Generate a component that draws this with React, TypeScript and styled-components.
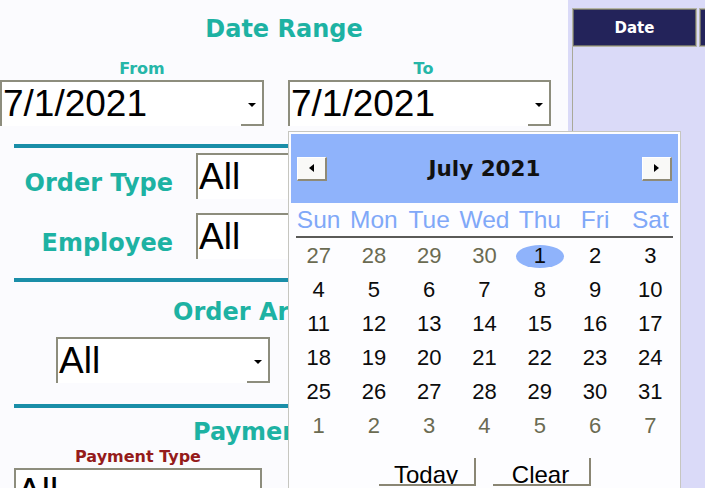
import React from "react";
import styled, { createGlobalStyle } from "styled-components";

const GlobalStyle = createGlobalStyle`
  html, body {
    margin: 0;
    padding: 0;
    overflow: hidden;
  }
  body {
    background: #fbfbfe;
    font-family: "DejaVu Sans", sans-serif;
  }
`;

const TEAL = "#1db2a3";
const BEVEL = "#8d8d7d";

const Page = styled.div`
  position: relative;
  display: flex;
  width: 705px;
  height: 488px;
  overflow: hidden;
`;

// left side: the filter form
const FilterPanel = styled.div`
  width: 568px;
  flex: none;
  display: flex;
  flex-direction: column;
  background: #fbfbfe;

  & > * {
    flex-shrink: 0;
  }
`;

const SectionTitle = styled.div<{ $indent?: number; $top: number }>`
  margin-top: ${(p) => p.$top}px;
  padding-left: ${(p) => (p.$indent ? `${p.$indent}px` : "0")};
  text-align: ${(p) => (p.$indent ? "left" : "center")};
  font-family: "DejaVu Sans", sans-serif;
  font-weight: bold;
  font-size: 24px;
  line-height: 28px;
  color: ${TEAL};
  white-space: nowrap;
`;

const DateRow = styled.div`
  display: grid;
  grid-template-columns: 264px 263px;
  column-gap: 24px;
  margin-top: 17px;
`;

const DateColumn = styled.div`
  display: flex;
  flex-direction: column;
`;

const SmallLabel = styled.div<{ $color?: string; $shift?: number }>`
  text-align: center;
  padding-left: ${(p) => p.$shift || 0}px;
  font-family: "DejaVu Sans", sans-serif;
  font-weight: bold;
  font-size: 16px;
  line-height: 18px;
  color: ${(p) => p.$color || "#26b6a8"};
  margin-bottom: 2px;
`;

const Field = styled.div<{ $width?: number; $left?: number; $top?: number }>`
  box-sizing: border-box;
  display: flex;
  flex-shrink: 0;
  width: ${(p) => (p.$width ? `${p.$width}px` : "100%")};
  height: 46px;
  margin-left: ${(p) => p.$left || 0}px;
  margin-top: ${(p) => p.$top || 0}px;
  background: #fff;
  border: 2px solid ${BEVEL};
  border-bottom: none;
`;

const FieldText = styled.div`
  flex: 1;
  padding-left: 1px;
  font-family: "Liberation Sans", Arial, sans-serif;
  font-size: 37px;
  line-height: 44px;
  color: #000;
  white-space: nowrap;
  overflow: hidden;
`;

const ArrowCell = styled.div`
  width: 21px;
  display: flex;
  align-items: center;
  justify-content: center;
  padding-top: 3px;
  border-bottom: 2px solid ${BEVEL};
`;

const DownArrow = styled.span`
  width: 0;
  height: 0;
  border-left: 4px solid transparent;
  border-right: 4px solid transparent;
  border-top: 4px solid #000;
`;

const Divider = styled.div<{ $top: number }>`
  height: 4px;
  margin: ${(p) => p.$top}px 14px 0;
  background: #1a8ea8;
`;

const FilterRow = styled.div<{ $top: number }>`
  display: grid;
  grid-template-columns: 173px 355px;
  column-gap: 23px;
  align-items: start;
  margin-top: ${(p) => p.$top}px;
`;

const RowLabel = styled.div`
  padding-top: 16px;
  text-align: right;
  font-family: "DejaVu Sans", sans-serif;
  font-weight: bold;
  font-size: 24px;
  line-height: 28px;
  color: ${TEAL};
  white-space: nowrap;
`;

const PaymentBlock = styled.div`
  width: 248px;
  margin-left: 14px;
  margin-top: 2px;
  display: flex;
  flex-direction: column;
`;

// right side: results grid
const ResultPanel = styled.div`
  flex: 1;
  background: #dadaf8;
  padding: 8px 0 0 4px;
  display: flex;
  flex-direction: column;
`;

const GridHead = styled.div`
  display: flex;
  gap: 2px;
`;

const HeadCell = styled.div<{ $width: number }>`
  box-sizing: border-box;
  flex: none;
  width: ${(p) => p.$width}px;
  height: 39px;
  display: flex;
  align-items: center;
  justify-content: center;
  background: #23235a;
  border: 1px solid #b4b4a4;
  box-shadow: inset 0 0 0 1px #6d6d6a;
  color: #fff;
  font-family: "DejaVu Sans", sans-serif;
  font-weight: bold;
  font-size: 15px;
`;

const GridBody = styled.div`
  flex: 1;
  border-left: 1px solid #a9a999;
`;

// calendar popup, dropped down from the "To" field
const Popup = styled.div`
  position: absolute;
  left: 288px;
  top: 131px;
  width: 393px;
  height: 380px;
  box-sizing: border-box;
  padding: 2px;
  background: #fdfdff;
  border: 1px solid #c6c6c0;
  display: flex;
  flex-direction: column;

  & > * {
    flex-shrink: 0;
  }
`;

const CalHeader = styled.div`
  height: 69px;
  display: flex;
  align-items: center;
  justify-content: space-between;
  padding: 0 6px;
  background: #8fb3fb;
`;

const NavButton = styled.div`
  box-sizing: border-box;
  width: 30px;
  height: 24px;
  display: flex;
  align-items: center;
  justify-content: center;
  background: #f9f9f7;
  border-top: 1px solid #fff;
  border-left: 1px solid #fff;
  border-right: 2px solid #8f8a76;
  border-bottom: 2px solid #8f8a76;
`;

const NavTriangle = styled.span<{ $dir: "left" | "right" }>`
  width: 0;
  height: 0;
  border-top: 4px solid transparent;
  border-bottom: 4px solid transparent;
  ${(p) =>
    p.$dir === "left"
      ? "border-right: 5px solid #000;"
      : "border-left: 5px solid #000;"}
`;

const MonthTitle = styled.div`
  font-family: "DejaVu Sans", sans-serif;
  font-weight: bold;
  font-size: 21.5px;
  color: #111;
`;

const WeekRow = styled.div`
  display: grid;
  grid-template-columns: repeat(7, 1fr);
  height: 33px;
  padding-top: 1px;
  box-sizing: border-box;
`;

const WeekDay = styled.div`
  text-align: center;
  font-family: "Liberation Sans", Arial, sans-serif;
  font-size: 24.5px;
  line-height: 31px;
  color: #80a8f8;
`;

const WeekRule = styled.div`
  height: 2px;
  margin: 0 5px;
  background: #5a5a58;
`;

const DaysGrid = styled.div`
  display: grid;
  grid-template-columns: repeat(7, 1fr);
  grid-auto-rows: 34px;
  padding-top: 1px;
`;

const DayCell = styled.div<{ $muted?: boolean }>`
  display: flex;
  align-items: center;
  justify-content: center;
  font-family: "Liberation Sans", Arial, sans-serif;
  font-size: 22px;
  color: ${(p) => (p.$muted ? "#6b6b52" : "#0c0c0c")};
`;

const Selected = styled.span`
  width: 48px;
  height: 23px;
  border-radius: 50%;
  background: #8fb3fb;
  display: flex;
  align-items: center;
  justify-content: center;
`;

const CalFooter = styled.div`
  display: flex;
  justify-content: center;
  gap: 17px;
  margin-top: 15px;
`;

// the label runs past the button's lower edge and is clipped there
const CalButton = styled.div<{ $width: number }>`
  box-sizing: border-box;
  width: ${(p) => p.$width}px;
  height: 28px;
  padding-top: 3px;
  overflow: hidden;
  text-align: center;
  font-family: "Liberation Sans", Arial, sans-serif;
  font-size: 24px;
  line-height: 28px;
  color: #000;
  border-right: 2px solid #8a8674;
  border-bottom: 2px solid #8a8674;
`;

type DateFieldProps = { label: string; value: string; shift: number };

function DateField({ label, value, shift }: DateFieldProps) {
  return (
    <DateColumn>
      <SmallLabel $shift={shift}>{label}</SmallLabel>
      <Field>
        <FieldText>{value}</FieldText>
        <ArrowCell>
          <DownArrow />
        </ArrowCell>
      </Field>
    </DateColumn>
  );
}

const weekDays = ["Sun", "Mon", "Tue", "Wed", "Thu", "Fri", "Sat"];

type Day = { n: number; muted?: boolean };

const days: Day[] = [
  ...[27, 28, 29, 30].map((n) => ({ n, muted: true })),
  ...Array.from({ length: 31 }, (_, i) => ({ n: i + 1 })),
  ...Array.from({ length: 7 }, (_, i) => ({ n: i + 1, muted: true })),
];

function Calendar() {
  return (
    <Popup>
      <CalHeader>
        <NavButton>
          <NavTriangle $dir="left" />
        </NavButton>
        <MonthTitle>July 2021</MonthTitle>
        <NavButton>
          <NavTriangle $dir="right" />
        </NavButton>
      </CalHeader>
      <WeekRow>
        {weekDays.map((d) => (
          <WeekDay key={d}>{d}</WeekDay>
        ))}
      </WeekRow>
      <WeekRule />
      <DaysGrid>
        {days.map((d, i) => (
          <DayCell key={i} $muted={d.muted}>
            {!d.muted && d.n === 1 ? <Selected>{d.n}</Selected> : d.n}
          </DayCell>
        ))}
      </DaysGrid>
      <CalFooter>
        <CalButton $width={97}>Today</CalButton>
        <CalButton $width={98}>Clear</CalButton>
      </CalFooter>
    </Popup>
  );
}

export default function App() {
  return (
    <Page>
      <GlobalStyle />
      <FilterPanel>
        <SectionTitle $top={15}>Date Range</SectionTitle>
        <DateRow>
          <DateField label="From" value="7/1/2021" shift={20} />
          <DateField label="To" value="7/1/2021" shift={8} />
        </DateRow>

        <Divider $top={18} />
        <FilterRow $top={5}>
          <RowLabel>Order Type</RowLabel>
          <Field>
            <FieldText>All</FieldText>
            <ArrowCell>
              <DownArrow />
            </ArrowCell>
          </Field>
        </FilterRow>
        <FilterRow $top={14}>
          <RowLabel>Employee</RowLabel>
          <Field>
            <FieldText>All</FieldText>
            <ArrowCell>
              <DownArrow />
            </ArrowCell>
          </Field>
        </FilterRow>

        <Divider $top={19} />
        <SectionTitle $top={16} $indent={173}>Order Area</SectionTitle>
        <Field $width={214} $left={56} $top={11}>
          <FieldText>All</FieldText>
          <ArrowCell>
            <DownArrow />
          </ArrowCell>
        </Field>

        <Divider $top={21} />
        <SectionTitle $top={10} $indent={193}>Payment</SectionTitle>
        <PaymentBlock>
          <SmallLabel $color="#951b1b">Payment Type</SmallLabel>
          <Field>
            <FieldText>All</FieldText>
            <ArrowCell>
              <DownArrow />
            </ArrowCell>
          </Field>
        </PaymentBlock>
      </FilterPanel>

      <ResultPanel>
        <GridHead>
          <HeadCell $width={125}>Date</HeadCell>
          <HeadCell $width={110} />
        </GridHead>
        <GridBody />
      </ResultPanel>

      <Calendar />
    </Page>
  );
}
